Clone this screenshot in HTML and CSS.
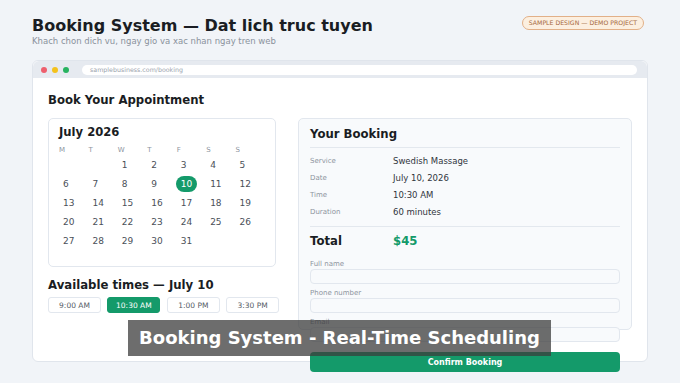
FILE: index.html
```html
<!DOCTYPE html>
<html lang="en">
<head>
    <meta charset="UTF-8">
    <meta name="viewport" content="width=device-width, initial-scale=1.0">
    <title>Booking System</title>
    <link rel="stylesheet" href="styles.css">
</head>
<body>
    <div class="header">
        <div>
            <h1 class="title">Booking System — Dat lich truc tuyen</h1>
            <p class="subtitle">Khach chon dich vu, ngay gio va xac nhan ngay tren web</p>
        </div>
        <span class="badge">SAMPLE DESIGN — DEMO PROJECT</span>
    </div>

    <div class="window">
        <div class="topbar">
            <span class="dot red"></span>
            <span class="dot yellow"></span>
            <span class="dot green"></span>
            <div class="url">samplebusiness.com/booking</div>
        </div>

        <div class="content">
            <h2 class="page-title">Book Your Appointment</h2>

            <div class="columns">
                <div class="left">
                    <div class="calendar">
                        <h3 class="month">July 2026</h3>
                        <div class="weekdays">
                            <span>M</span><span>T</span><span>W</span><span>T</span><span>F</span><span>S</span><span>S</span>
                        </div>
                        <div class="days">
                            <span></span><span></span>
                            <span><b>1</b></span><span><b>2</b></span><span><b>3</b></span><span><b>4</b></span><span><b>5</b></span>
                            <span><b>6</b></span><span><b>7</b></span><span><b>8</b></span><span><b>9</b></span><span><b class="selected">10</b></span><span><b>11</b></span><span><b>12</b></span>
                            <span><b>13</b></span><span><b>14</b></span><span><b>15</b></span><span><b>16</b></span><span><b>17</b></span><span><b>18</b></span><span><b>19</b></span>
                            <span><b>20</b></span><span><b>21</b></span><span><b>22</b></span><span><b>23</b></span><span><b>24</b></span><span><b>25</b></span><span><b>26</b></span>
                            <span><b>27</b></span><span><b>28</b></span><span><b>29</b></span><span><b>30</b></span><span><b>31</b></span>
                        </div>
                    </div>

                    <h3 class="times-title">Available times — July 10</h3>
                    <div class="slots">
                        <button class="slot">9:00 AM</button>
                        <button class="slot active">10:30 AM</button>
                        <button class="slot">1:00 PM</button>
                        <button class="slot">3:30 PM</button>
                    </div>
                </div>

                <div class="summary">
                    <h3 class="summary-title">Your Booking</h3>
                    <div class="rows">
                        <div class="row"><span class="label">Service</span><span class="value">Swedish Massage</span></div>
                        <div class="row"><span class="label">Date</span><span class="value">July 10, 2026</span></div>
                        <div class="row"><span class="label">Time</span><span class="value">10:30 AM</span></div>
                        <div class="row"><span class="label">Duration</span><span class="value">60 minutes</span></div>
                    </div>
                    <div class="total">
                        <span class="total-label">Total</span>
                        <span class="total-price">$45</span>
                    </div>

                    <div class="form">
                        <div class="field">
                            <label class="field-label">Full name</label>
                            <div class="input"></div>
                        </div>
                        <div class="field">
                            <label class="field-label">Phone number</label>
                            <div class="input"></div>
                        </div>
                        <div class="field">
                            <label class="field-label">Email</label>
                            <div class="input"></div>
                        </div>
                        <button class="confirm">Confirm Booking</button>
                    </div>
                </div>
            </div>
        </div>
    </div>

    <div class="caption">Booking System - Real-Time Scheduling</div>
</body>
</html>
```

FILE: styles.css
```css
body {
    font-family: "DejaVu Sans", sans-serif;
    margin: 0;
    padding: 16px 32px 0 32px;
    background-color: #f1f4f8;
    color: #1a1d23;
    height: 367px;
    overflow: hidden;
    position: relative;
}

.header {
    display: flex;
    justify-content: space-between;
    align-items: flex-start;
    padding-right: 4px;
}

.title {
    font-size: 16px;
    line-height: 20px;
    margin: 0;
    font-weight: bold;
}

.subtitle {
    font-size: 8.5px;
    line-height: 11px;
    margin: 0;
    color: #8a929c;
}

.badge {
    margin-top: 0;
    font-size: 6.2px;
    line-height: 12px;
    padding: 0 6px;
    color: #a5683e;
    background-color: #fcefe0;
    border: 1px solid #e2b088;
    border-radius: 8px;
}

.window {
    margin-top: 13px;
    height: 300px;
    background-color: #fff;
    border: 1px solid #e0e5ec;
    border-radius: 6px;
}

.topbar {
    height: 17px;
    background-color: #e6eaf0;
    border-radius: 6px 6px 0 0;
    display: flex;
    align-items: center;
    padding: 0 10px 0 8px;
    gap: 5px;
}

.dot {
    width: 6px;
    height: 6px;
    border-radius: 50%;
}

.red { background-color: #ee5f6d; }
.yellow { background-color: #f4c21c; }
.green { background-color: #27b35f; }

.url {
    flex: 1;
    margin-left: 8px;
    height: 10px;
    background-color: #fff;
    border-radius: 5px;
    font-size: 6.3px;
    line-height: 10px;
    color: #9aa2ac;
    padding-left: 8px;
}

.content {
    padding: 14px 15px 0 15px;
}

.page-title {
    font-size: 11.7px;
    line-height: 16px;
    margin: 0;
    font-weight: bold;
}

.columns {
    display: grid;
    grid-template-columns: 228px 1fr;
    gap: 22px;
    margin-top: 10px;
    align-items: start;
}

.calendar {
    border: 1px solid #e2e7ee;
    border-radius: 5px;
    padding: 6px 10px 0 10px;
    box-sizing: border-box;
    height: 149px;
}

.month {
    font-size: 11.6px;
    line-height: 14px;
    margin: 0;
    font-weight: bold;
}

.weekdays, .days {
    display: grid;
    grid-template-columns: repeat(7, 1fr);
}

.weekdays {
    margin-top: 6px;
    font-size: 7px;
    line-height: 10px;
    color: #8d949e;
}

.days span {
    height: 19px;
    display: flex;
    align-items: center;
}

.days b {
    font-weight: normal;
    font-size: 9px;
    line-height: 12px;
    color: #4a5058;
    padding: 2px 5px;
    margin-left: -1px;
    border-radius: 9px;
}

.days b.selected {
    background-color: #149a6a;
    color: #fff;
}

.times-title {
    font-size: 11.7px;
    line-height: 14px;
    margin: 11px 0 0 0;
    font-weight: bold;
}

.slots {
    display: flex;
    gap: 6.4px;
    margin-top: 5px;
}

.slot {
    flex-shrink: 0;
    width: 53px;
    height: 16px;
    padding: 0;
    font-family: "DejaVu Sans", sans-serif;
    font-size: 7.5px;
    color: #555c66;
    background-color: #fff;
    border: 1px solid #e2e7ee;
    border-radius: 3px;
}

.slot.active {
    background-color: #149a6a;
    border-color: #149a6a;
    color: #fff;
}

.summary {
    height: 212px;
    box-sizing: border-box;
    background-color: #f8fafc;
    border: 1px solid #e2e7ee;
    border-radius: 5px;
    padding: 8px 11px 0 11px;
}

.summary-title {
    font-size: 11.7px;
    line-height: 14px;
    margin: 0;
    padding-bottom: 6px;
    border-bottom: 1px solid #e3e8ee;
    font-weight: bold;
}

.rows {
    margin-top: 4px;
    padding-bottom: 6px;
    border-bottom: 1px solid #e3e8ee;
}

.row {
    display: flex;
    height: 17px;
    align-items: center;
}

.label {
    width: 83px;
    font-size: 7px;
    color: #8d949e;
}

.value {
    font-size: 8.5px;
    color: #30353c;
}

.total {
    display: flex;
    margin-top: 7px;
    line-height: 14px;
    font-weight: bold;
    font-size: 11.7px;
}

.total-label {
    width: 83px;
}

.total-price {
    color: #149a6a;
}

.form {
    margin-top: 11px;
}

.field + .field {
    margin-top: 4px;
}

.field-label {
    display: block;
    font-size: 7px;
    line-height: 10px;
    color: #8d949e;
}

.input {
    height: 13px;
    background-color: #f8fafc;
    border: 1px solid #e2e7ee;
    border-radius: 4px;
}

.confirm {
    display: block;
    width: 100%;
    margin-top: 10px;
    height: 20px;
    padding: 0;
    border: none;
    border-radius: 4px;
    background-color: #149a6a;
    color: #fff;
    font-family: "DejaVu Sans", sans-serif;
    font-size: 8px;
    font-weight: bold;
}

.caption {
    position: absolute;
    left: 128px;
    top: 320px;
    width: 423px;
    height: 36px;
    background-color: rgba(60, 60, 60, 0.75);
    color: #fff;
    font-size: 18px;
    font-weight: bold;
    line-height: 36px;
    text-align: center;
}
```
